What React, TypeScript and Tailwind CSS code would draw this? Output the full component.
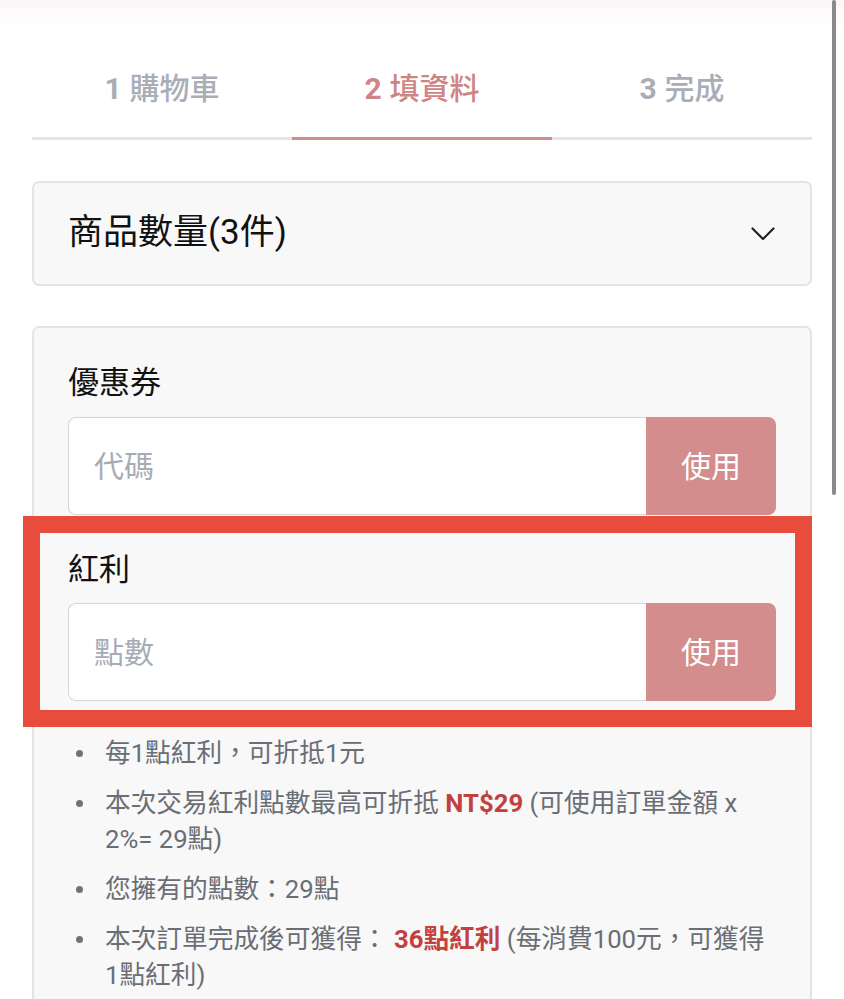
import { useState } from 'react';

const steps = [
  { no: '1', label: '購物車' },
  { no: '2', label: '填資料' },
  { no: '3', label: '完成' },
];

const Dot = () => (
  <span className="mt-[15px] ml-[8px] block h-[7px] w-[7px] rounded-full bg-[#6f7378]" />
);

const InputRow = ({ placeholder }: { placeholder: string }) => (
  <div className="flex h-[98px] w-full">
    <input
      className="h-full min-w-0 flex-1 rounded-l-[8px] border border-r-0 border-[#d4d6da] bg-white px-[25px] text-[30px] text-[#333] outline-none placeholder:text-[#a7acb4]"
      placeholder={placeholder}
    />
    <button className="h-full w-[130px] rounded-r-[8px] bg-[#d38d8c] text-[30px] text-white">
      使用
    </button>
  </div>
);

export default function App() {
  const [active] = useState(1);

  return (
    <div className="relative h-[999px] w-[844px] overflow-hidden bg-white font-[Roboto,'Noto_Sans_CJK_TC',sans-serif]">
      {/* faint header shadow */}
      <div className="h-[30px] bg-gradient-to-b from-[#fdf6f7] to-white" />

      <div className="px-[32px]">
        {/* steps */}
        <div className="mt-[9px] flex">
          {steps.map((s, i) => (
            <div
              key={s.no}
              className={
                i === active
                  ? 'flex h-[101px] flex-1 items-center justify-center border-b-[3px] border-[#d08c8b] text-[30px] text-[#cf8584]'
                  : 'flex h-[101px] flex-1 items-center justify-center border-b-[3px] border-[#e4e5e8] text-[30px] text-[#a9aeb6]'
              }
            >
              <span className="font-bold">{s.no}</span>
              <span className="ml-[8px] font-medium">{s.label}</span>
            </div>
          ))}
        </div>

        {/* product count */}
        <div className="mt-[41px] flex h-[105px] items-center justify-between rounded-[7px] border-2 border-[#e3e4e8] bg-[#f8f8f9] pl-[34px] pr-[35px]">
          <span className="text-[35px] text-[#111]">商品數量(3件)</span>
          <svg width="24" height="14" viewBox="0 0 24 14" fill="none">
            <polyline points="1.5,1.5 12,12 22.5,1.5" stroke="#222" strokeWidth="2.2" strokeLinecap="round" strokeLinejoin="round" />
          </svg>
        </div>

        {/* discounts */}
        <div className="mt-[40px] rounded-t-[7px] border-2 border-b-0 border-[#e3e4e8] bg-[#f8f8f9] px-[34px] pt-[35px] pb-[40px]">
          <div className="flex h-[40px] items-center text-[31px] text-[#111]">優惠券</div>
          <div className="mt-[14px]">
            <InputRow placeholder="代碼" />
          </div>

          <div className="mt-[35px] flex h-[40px] items-center text-[31px] text-[#111]">紅利</div>
          <div className="mt-[13px]">
            <InputRow placeholder="點數" />
          </div>

          <ul className="mt-[34px] flex flex-col gap-[14px] pr-[8px] text-[25.7px] leading-[36px] text-[#6a6e74]">
            <li className="grid grid-cols-[37px_1fr]">
              <Dot />
              <span>每1點紅利，可折抵1元</span>
            </li>
            <li className="grid grid-cols-[37px_1fr]">
              <Dot />
              <span>
                本次交易紅利點數最高可折抵 <b className="text-[#c2413f]">NT$29</b> (可使用訂單金額 x 2%= 29點)
              </span>
            </li>
            <li className="grid grid-cols-[37px_1fr]">
              <Dot />
              <span>您擁有的點數：29點</span>
            </li>
            <li className="grid grid-cols-[37px_1fr]">
              <Dot />
              <span>
                本次訂單完成後可獲得： <b className="text-[#c2413f]">36點紅利</b> (每消費100元，可獲得1點紅利)
              </span>
            </li>
          </ul>
        </div>
      </div>

      {/* highlight annotation */}
      <div className="pointer-events-none absolute left-[23px] top-[516px] h-[211px] w-[789px] border-[17px] border-[#e84c3d]" />

      {/* scrollbar */}
      <div className="absolute right-[8px] top-0 h-[495px] w-[4px] rounded-full bg-[#8a8a8a]" />
    </div>
  );
}
